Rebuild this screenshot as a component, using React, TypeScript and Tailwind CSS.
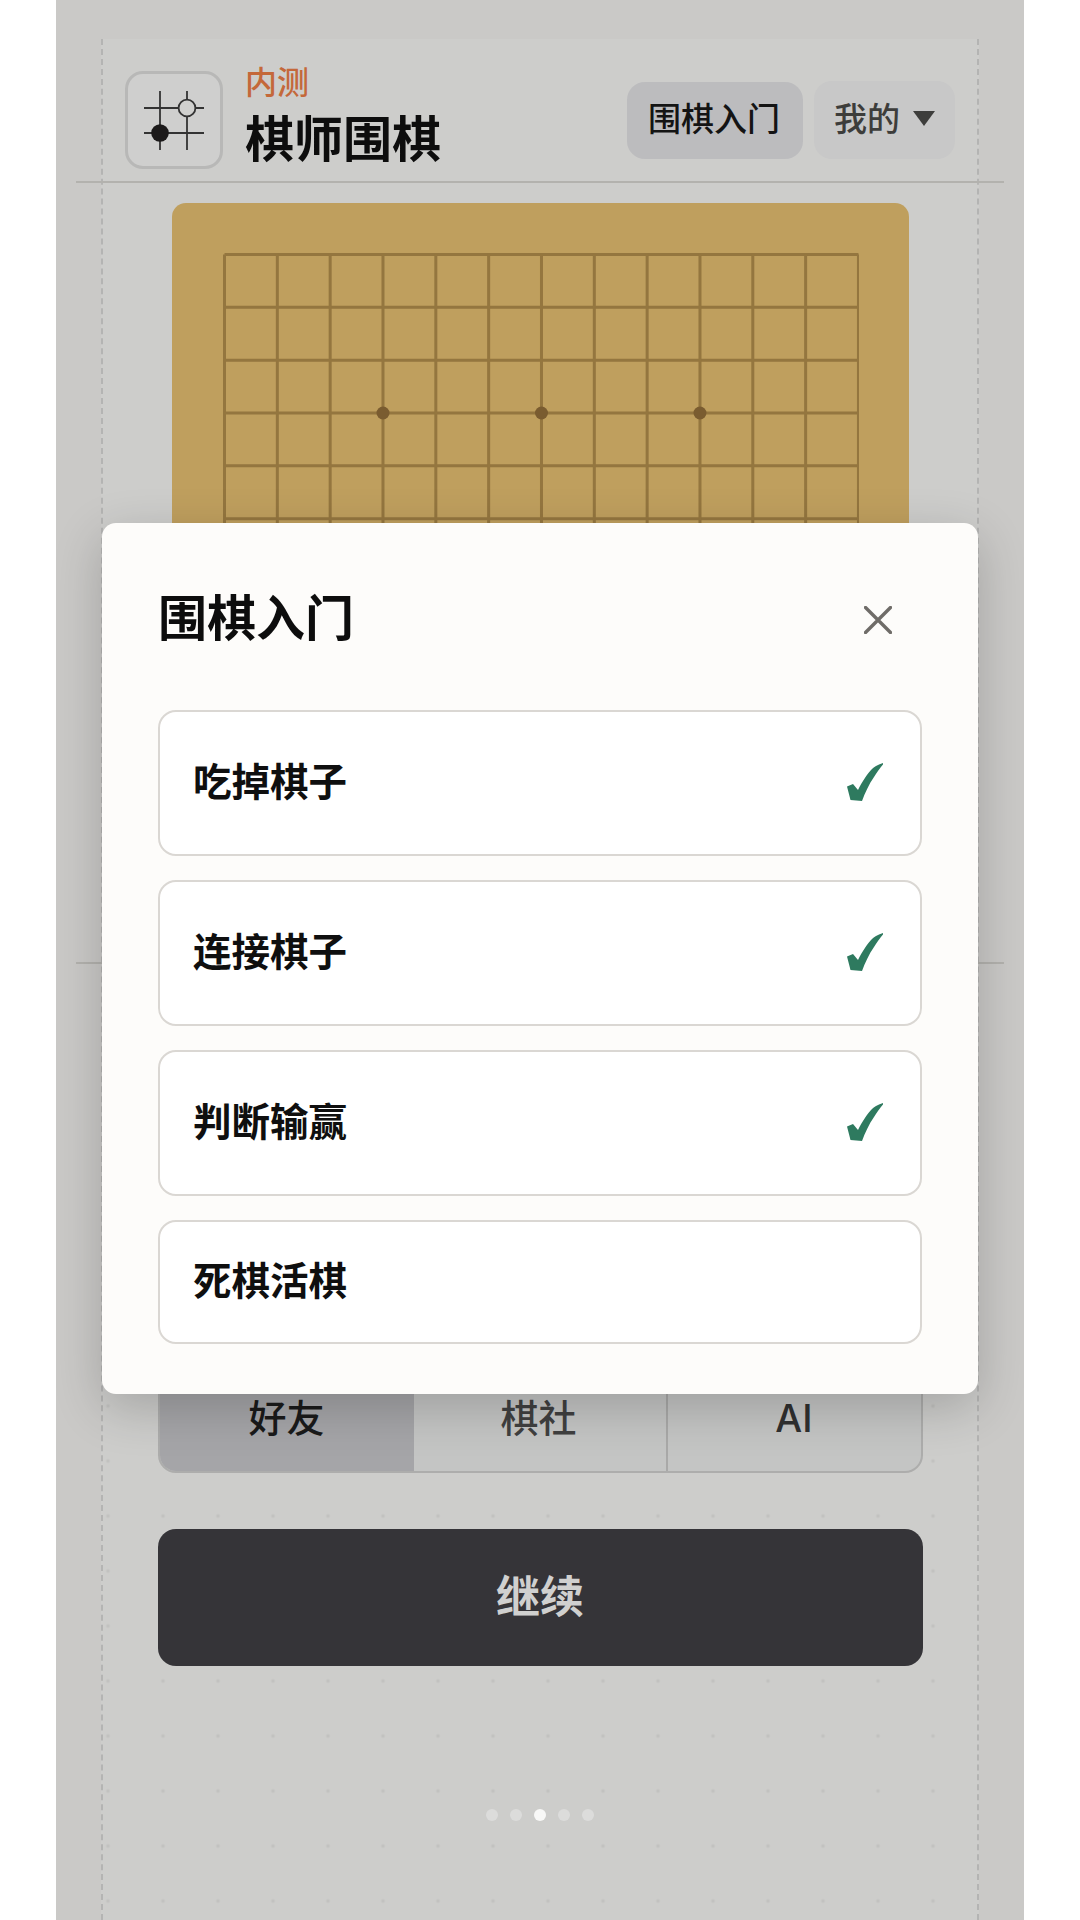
import React from "react";

const font = { fontFamily: '"Noto Sans CJK SC", "Noto Sans", sans-serif' };

function Logo() {
  return (
    <svg width="92" height="92" viewBox="3 3 92 92" fill="none">
      <g stroke="#333333" strokeWidth="1.8">
        <path d="M19 37H79M19 62H79M35 20V79M62 20V79" />
      </g>
      <circle cx="35" cy="62" r="8.8" fill="#1c1a1a" />
      <circle cx="62" cy="37" r="8.4" fill="#d0d0ce" stroke="#333333" strokeWidth="1.8" />
    </svg>
  );
}

function Board() {
  const cell = 52.83;
  const idx = Array.from({ length: 13 }, (_, i) => i);
  return (
    <svg width="636" height="636" viewBox="-1.5 -1.5 636 636" fill="none">
      {idx.map((i) => (
        <path
          key={i}
          d={`M${i * cell} 0V${12 * cell}M0 ${i * cell}H${12 * cell}`}
          stroke="#94763f"
          strokeWidth="3"
        />
      ))}
      {[3, 6, 9].flatMap((x) =>
        [3, 6, 9].map((y) => (
          <circle key={`${x}-${y}`} cx={x * cell} cy={y * cell} r="6.5" fill="#7a5c30" />
        ))
      )}
    </svg>
  );
}

function Check() {
  return (
    <svg className="mt-[4px]" width="36" height="38" viewBox="0 0 36 38" fill="#2e7a5f">
      <path d="M36 0C30 2 27 4 25 6C20 11 15 19 11 27L6 21L0 23.5L3.5 37L15 38C18 30 22 21 27 14C30 9 33 5 36 1.5Z" />
    </svg>
  );
}

function LessonRow({ label, done, tall }: { label: string; done?: boolean; tall?: boolean }) {
  return (
    <div
      className={`flex items-center justify-between rounded-[18px] border-[2.5px] border-[#dad7d3] bg-white pb-[7px] pl-[33px] pr-[37px] ${
        tall ? "h-[146px]" : "h-[124px]"
      }`}
    >
      <span className="text-[38.5px] font-bold leading-none text-[#0f0f0f]">{label}</span>
      {done && <Check />}
    </div>
  );
}

export default function App() {
  return (
    <div className="flex min-h-[1920px] justify-center bg-white" style={font}>
      <div className="relative h-[1920px] w-[968px] overflow-hidden bg-[#cac9c7] pl-[45px] pr-[45px] pt-[39px]">
        <div className="flex h-full flex-col border-x-2 border-dashed border-x-[#b4b4b3] bg-[#cdcdcb]">
          {/* Header */}
          <header className="flex h-[142px] items-center justify-between px-[22px] pt-[20px]">
            <div className="flex items-center gap-[22px]">
              <div className="flex h-[98px] w-[98px] shrink-0 items-center justify-center rounded-[18px] border-[3px] border-[#b8b8b7] bg-[#cfcfce]">
                <Logo />
              </div>
              <div className="flex flex-col gap-[12px] pb-[12px]">
                <span className="text-[32px] font-medium leading-[32px] text-[#c4683a]">内测</span>
                <span className="text-[49px] font-bold leading-[56px] text-[#0d0d0d]">棋师围棋</span>
              </div>
            </div>
            <div className="flex items-center gap-[11px]">
              <div className="flex h-[77px] w-[176px] items-center justify-center rounded-[18px] bg-[#bcbcbe] pb-[4px] pr-[2px] text-[33px] font-medium text-[#141414]">
                围棋入门
              </div>
              <div className="flex h-[78px] w-[141px] items-center justify-center gap-[13px] rounded-[18px] bg-[#c8c8c8] pb-[4px] text-[33px] font-medium text-[#3d3d3b]">
                我的
                <svg width="22" height="15" viewBox="0 0 22 15" fill="#3e3e3c">
                  <path d="M0 0H22L11 15Z" />
                </svg>
              </div>
            </div>
          </header>
          <div className="mx-[-27px] h-[2px] shrink-0 bg-[#b3b2ae]" />

          {/* Board */}
          <div className="h-[779px] shrink-0 pl-[69px] pt-[20px]">
            <div className="flex h-[738px] w-[737px] items-start justify-center rounded-[14px] bg-[#bf9f5e] pt-[50px]">
              <Board />
            </div>
          </div>
          <div className="mx-[-27px] h-[2px] shrink-0 bg-[#b3b2ae]" />

          {/* Lower part */}
          <div className="flex flex-1 flex-col items-center bg-[radial-gradient(circle,#c2c2c0_1.6px,transparent_2.2px)] bg-[length:55px_55px] bg-[position:-22.5px_-25.5px] pt-[421px]">
            <div className="flex h-[88px] w-[765px] overflow-hidden rounded-b-[18px] border-2 border-[#adadac] bg-[#c4c5c4] text-[38px] font-medium">
              <div className="flex w-[254px] items-center justify-center bg-[#a5a5a8] pb-[28px] text-[#1a1a1a]">好友</div>
              <div className="flex w-[254px] items-center justify-center border-r-2 border-[#a9a9a8] pb-[28px] pr-[2px] text-[#404040]">棋社</div>
              <div className="flex flex-1 items-center justify-center pb-[22px] text-[#303030]" style={{ fontFamily: 'Inter, "Noto Sans CJK SC", sans-serif' }}>AI</div>
            </div>
            <div className="mt-[56px] flex h-[137px] w-[765px] items-center justify-center rounded-[18px] bg-[#353438] pb-[8px] text-[44px] font-bold text-[#d0d0cf]">
              继续
            </div>
            <div className="mt-[143px] flex gap-[12px]">
              <span className="h-[12px] w-[12px] rounded-full bg-[#dcdcdb]" />
              <span className="h-[12px] w-[12px] rounded-full bg-[#dcdcdb]" />
              <span className="h-[12px] w-[12px] rounded-full bg-[#f8f8f7]" />
              <span className="h-[12px] w-[12px] rounded-full bg-[#dcdcdb]" />
              <span className="h-[12px] w-[12px] rounded-full bg-[#dcdcdb]" />
            </div>
          </div>
        </div>

        {/* Modal */}
        <div className="absolute left-[46px] top-[523px] flex h-[871px] w-[876px] flex-col rounded-[14px] bg-[#fdfcfa] px-[56px] shadow-[0_14px_50px_rgba(0,0,0,0.2)]">
          <div className="flex h-[187px] shrink-0 items-center justify-between pr-[30px]">
            <span className="pb-[4px] text-[49px] font-bold leading-none text-[#0d0d0d]">围棋入门</span>
            <svg className="mt-[6px]" width="28" height="28" viewBox="0 0 28 28" fill="none" stroke="#6f6c68" strokeWidth="3.4" strokeLinecap="round">
              <path d="M1.5 1.5L26.5 26.5M26.5 1.5L1.5 26.5" />
            </svg>
          </div>
          <div className="flex flex-col gap-[24px]">
            <LessonRow label="吃掉棋子" done tall />
            <LessonRow label="连接棋子" done tall />
            <LessonRow label="判断输赢" done tall />
            <LessonRow label="死棋活棋" />
          </div>
        </div>
      </div>
    </div>
  );
}
